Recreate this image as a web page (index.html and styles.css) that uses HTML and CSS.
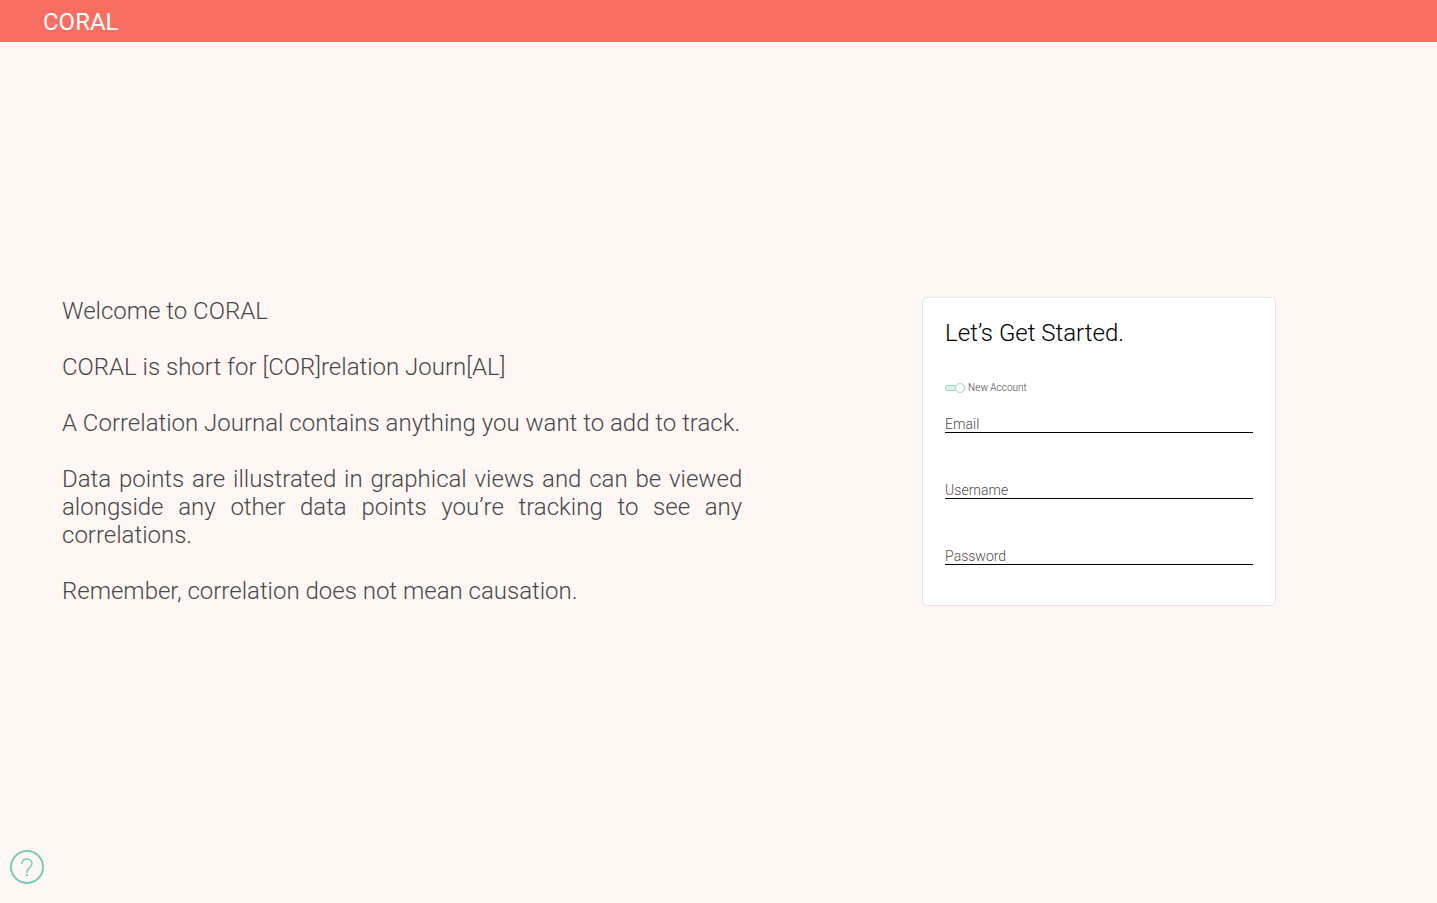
FILE: index.html
```html
<!DOCTYPE html>
<html lang="en">
<head>
<meta charset="utf-8">
<title>CORAL</title>
<link rel="stylesheet" href="styles.css">
</head>
<body>
<header class="topbar"><h1 class="brand">CORAL</h1></header>
<main class="landing">
  <section class="intro">
    <p>Welcome to CORAL</p>
    <p>CORAL is short for [COR]relation Journ[AL]</p>
    <p>A Correlation Journal contains anything you want to add to track.</p>
    <p>Data points are illustrated in graphical views and can be viewed alongside any other data points you’re tracking to see any correlations.</p>
    <p>Remember, correlation does not mean causation.</p>
  </section>
  <form class="card">
    <h2 class="card-title">Let’s Get Started.</h2>
    <label class="toggle"><input class="toggle-input" type="checkbox" role="switch" checked><span>New Account</span></label>
    <input class="field" type="email" placeholder="Email" aria-label="Email">
    <input class="field" type="text" placeholder="Username" aria-label="Username">
    <input class="field" type="password" placeholder="Password" aria-label="Password">
  </form>
</main>
<button class="help" type="button" aria-label="Help">
  <svg class="help-icon" viewBox="0 0 34 34" aria-hidden="true">
    <circle cx="17" cy="17" r="16" stroke-width="2"/>
    <path d="M11.800 14C11.800 10.800 14 9 17 9s5 2 5 4.600c0 4-5 4.200-5 8.600v.8" stroke-width="1.500"/>
    <path d="M16 25.200h2" stroke-width="2"/>
  </svg>
</button>
</body>
</html>
```
FILE: styles.css
```css
* { box-sizing: border-box; }
body {
  margin: 0;
  min-height: 100vh;
  display: flex;
  flex-direction: column;
  background: #fff7f4;
  font-family: Roboto, sans-serif;
  font-weight: 300;
}
.topbar {
  height: 42px;
  padding: 2px 43px 0;
  display: flex;
  align-items: center;
  background: #f96e62;
  color: #fff;
}
.brand { margin: 0; font-size: 24px; line-height: 28px; font-weight: 400; }
.landing {
  flex: 1;
  display: grid;
  grid-template-columns: 15fr 11fr;
  align-content: center;
  align-items: start;
  padding: 0 43px 42px 0;
}
.intro {
  margin: 0 62px;
  display: grid;
  gap: 28px;
  color: #484848;
  font-size: 24px;
  line-height: 28px;
  text-align: justify;
}
.intro p { margin: 0; }
.card {
  justify-self: center;
  width: 354px;
  padding: 21px 22px 40px;
  display: flex;
  flex-direction: column;
  background: #fff;
  border: 1px solid #e4e4e4;
  border-radius: 5px;
}
.card-title { margin: 0 0 35px; font-size: 24px; line-height: 28px; font-weight: 300; }
.toggle {
  display: flex;
  align-items: center;
  gap: 3px;
  margin-bottom: 21px;
  color: #444;
  font-size: 10px;
  line-height: 12px;
}
.toggle-input {
  appearance: none;
  position: relative;
  width: 20px;
  height: 6px;
  margin: 0;
  border: 1px solid #9adcc9;
  border-radius: 2px;
  background: #dff3ec;
}
.toggle-input::after {
  content: "";
  box-sizing: border-box;
  position: absolute;
  top: -3px;
  right: -1px;
  width: 10px;
  height: 10px;
  border: 1px solid #9adcc9;
  border-radius: 50%;
  background: #fff;
}
.field {
  height: 18px;
  margin: 0 0 48px;
  padding: 0;
  border: 0;
  border-bottom: 1px solid #000;
  border-radius: 0;
  background: transparent;
  font: inherit;
  font-size: 14px;
}
.field:last-child { margin-bottom: 0; }
.field::placeholder { color: #4c4c4c; opacity: 1; }
.help {
  position: fixed;
  left: 10px;
  bottom: 19px;
  width: 34px;
  height: 34px;
  padding: 0;
  border: 0;
  border-radius: 50%;
  background: transparent;
  color: #7dcbb6;
}
.help-icon {
  display: block;
  width: 34px;
  height: 34px;
  fill: none;
  stroke: currentColor;
}
```
